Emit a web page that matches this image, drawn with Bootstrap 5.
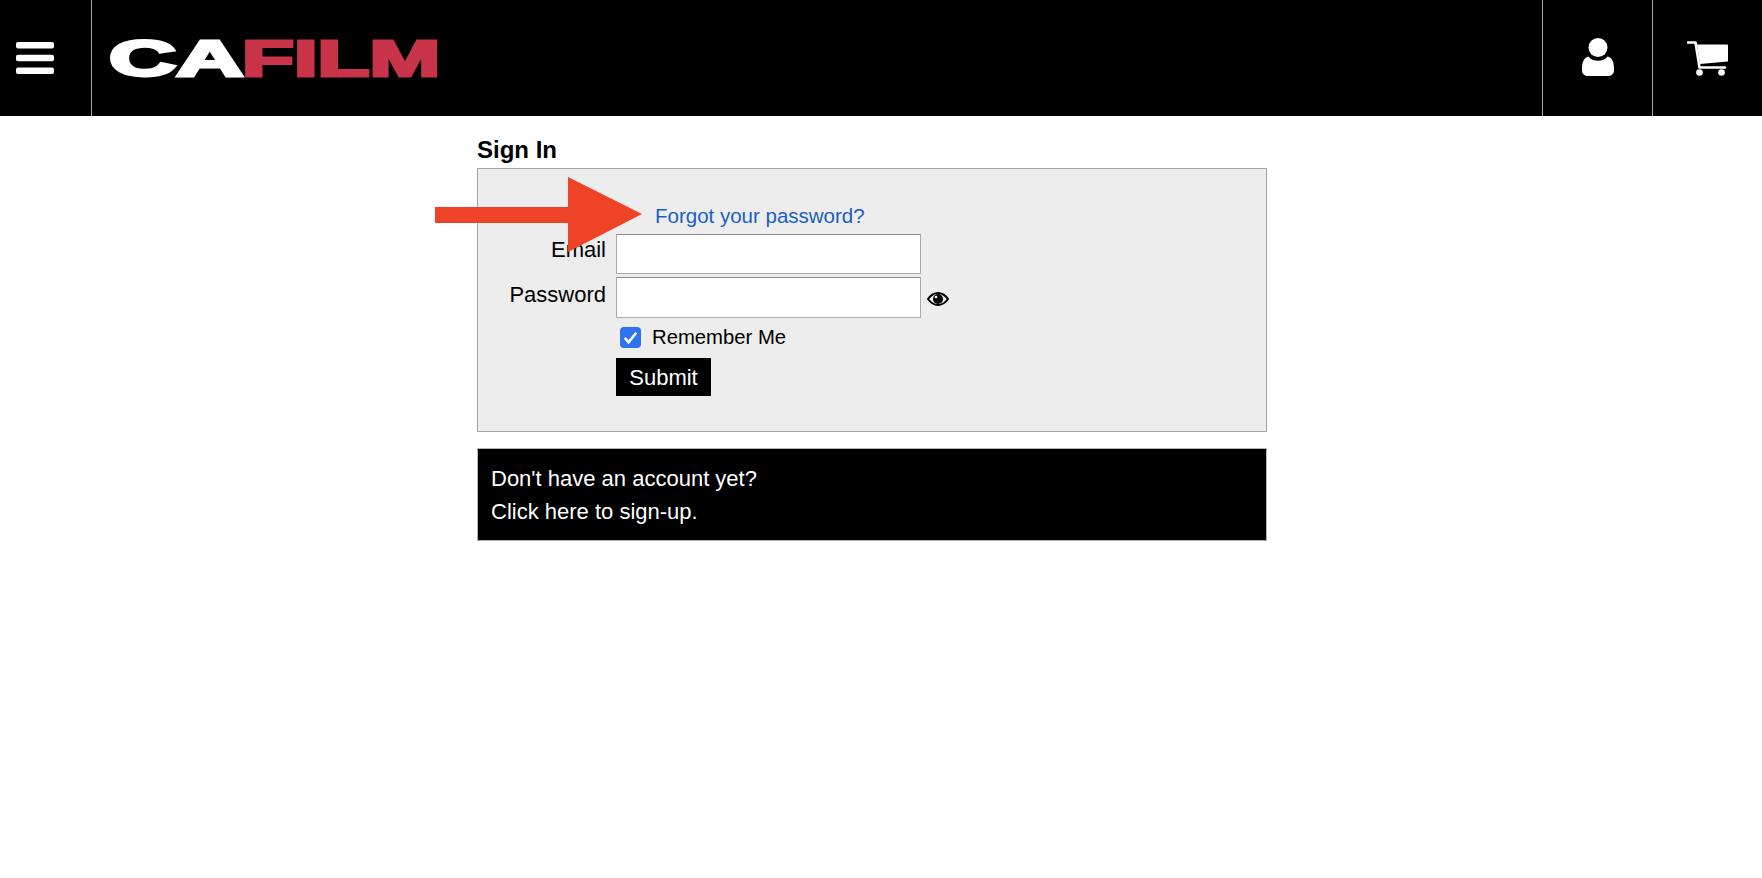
<!DOCTYPE html>
<html lang="en">
<head>
    <meta charset="UTF-8">
    <meta name="viewport" content="width=device-width, initial-scale=1.0">
    <title>Sign In</title>
    <link rel="stylesheet" href="https://cdn.jsdelivr.net/npm/bootstrap@5.3.0/dist/css/bootstrap.min.css">
    <style>
        body {
            font-family: "Liberation Sans", Arial, sans-serif;
            color: #000;
            background: #fff;
        }
        .site-header {
            height: 116px;
            background: #000;
        }
        .menu-cell {
            width: 92px;
            padding-left: 16px;
            border-right: 1px solid #aaa;
        }
        .logo-cell {
            padding-left: 16px;
        }
        .logo-svg {
            overflow: visible;
        }
        .logo-text {
            font-family: "Liberation Sans", Arial, sans-serif;
            font-weight: 700;
            font-size: 50px;
            stroke-width: 3px;
        }
        .logo-white { fill: #fff; stroke: #fff; }
        .logo-red { fill: #c9344a; stroke: #c9344a; }
        .icon-cell {
            width: 110px;
            border-left: 1px solid #aaa;
        }
        .user-icon {
            margin-bottom: 2px;
        }
        .page-main {
            width: 790px;
            margin-left: 477px;
            position: relative;
        }
        .page-title {
            font-size: 24px;
            font-weight: 700;
            line-height: 28px;
            margin: 0;
            padding-top: 20px;
            height: 52px;
        }
        .signin-panel {
            height: 264px;
            background: #ededed;
            border: 1px solid #a5a5a5;
            padding-top: 35px;
            font-size: 22px;
        }
        .form-rows {
            display: grid;
            grid-template-columns: 128px 305px auto;
            column-gap: 10px;
            justify-content: start;
        }
        .forgot-link {
            color: #1b5fc6;
            text-decoration: none;
            font-size: 20.5px;
            line-height: 24px;
            padding-left: 39px;
            height: 30px;
            grid-column: 2 / 4;
        }
        .row-label {
            text-align: right;
            line-height: 24px;
            padding-top: 4px;
        }
        .password-label {
            padding-top: 6px;
        }
        .plain-input {
            height: 40px;
            border: 1px solid #aaa;
            border-top-color: #8a8a8a;
            background: #fff;
            width: 305px;
            padding: 0 6px;
            margin-bottom: 3px;
            outline: none;
        }
        #password {
            height: 41px;
            margin-bottom: 0;
        }
        .eye-icon {
            margin-top: 15px;
            margin-left: -4px;
        }
        .remember-row {
            height: 40px;
            gap: 11px;
            padding-left: 4px;
            padding-bottom: 1px;
            font-size: 20.3px;
        }
        .remember-row input {
            appearance: none;
            width: 21px;
            height: 21px;
            margin: 0;
            border-radius: 4px;
            background: #2f73ee url("data:image/svg+xml,%3Csvg xmlns='http://www.w3.org/2000/svg' viewBox='0 0 22 22'%3E%3Cpath d='M5 11.5l4 4.5 8-10' fill='none' stroke='%23fff' stroke-width='2.8'/%3E%3C/svg%3E");
        }
        .submit-btn {
            width: 95px;
            height: 38px;
            background: #000;
            color: #fff;
            border: 0;
            border-radius: 0;
            font-size: 22px;
            padding: 0;
        }
        .signup-box {
            margin-top: 16px;
            height: 93px;
            background: #000;
            color: #fff;
            border: 1px solid #b5b5b5;
            padding: 13px 13px;
            font-size: 22px;
            line-height: 33px;
        }
        .signup-box a {
            color: #fff;
            text-decoration: none;
        }
        .callout-arrow {
            position: absolute;
            left: -42px;
            top: 61px;
        }
    </style>
</head>
<body>

    <header class="site-header d-flex align-items-stretch">
        <div class="menu-cell d-flex align-items-center">
            <svg width="38" height="32" viewBox="0 0 38 32" aria-label="Menu">
                <rect x="0" y="0" width="38" height="6.500" rx="2" fill="#fff"/>
                <rect x="0" y="12.800" width="38" height="6.500" rx="2" fill="#fff"/>
                <rect x="0" y="25.500" width="38" height="6.500" rx="2" fill="#fff"/>
            </svg>
        </div>
        <div class="logo-cell d-flex align-items-center flex-grow-1">
            <svg class="logo-svg" width="332" height="46" viewBox="0 0 332 46" aria-label="CAFILM">
                <text class="logo-text logo-white" transform="translate(1 40.800) scale(1.860 1)">CA</text>
                <text class="logo-text logo-red" transform="translate(134 40.800) scale(1.700 1)">FILM</text>
            </svg>
        </div>
        <div class="icon-cell d-flex align-items-center justify-content-center">
            <svg class="user-icon" width="32" height="38" viewBox="0 0 32 38" aria-label="Account">
                <circle cx="16" cy="9.500" r="9.500" fill="#fff"/>
                <path d="M6.500 18.500c2 3 5.500 4.300 9.500 4.300s7.500-1.300 9.500-4.300c4 .5 6.500 5.500 6.500 11.500v2.500c0 3-2.500 5.500-5.500 5.500H5.500C2.500 38 0 35.500 0 32.500V30c0-6 2.500-11 6.500-11.500z" fill="#fff"/>
            </svg>
        </div>
        <div class="icon-cell d-flex align-items-center justify-content-center">
            <svg width="41" height="35" viewBox="0 0 41 35" aria-label="Cart">
                <path d="M1 1.500H8.500L12.500 26.500H38" fill="none" stroke="#fff" stroke-width="2.600" stroke-linecap="round" stroke-linejoin="round"/>
                <path d="M10 3.500H40a1 1 0 0 1 1 1V20.500L13 23z" fill="#fff"/>
                <circle cx="12.500" cy="31.500" r="3.300" fill="#fff"/>
                <circle cx="34.500" cy="31.500" r="3.300" fill="#fff"/>
            </svg>
        </div>
    </header>

    <main class="page-main">
        <h1 class="page-title">Sign In</h1>

        <div class="signin-panel">
            <form class="form-rows">
                <a class="forgot-link" href="#">Forgot your password?</a>

                <label class="row-label" for="email">Email</label>
                <input class="plain-input" id="email" type="text">
                <span></span>

                <label class="row-label password-label" for="password">Password</label>
                <input class="plain-input" id="password" type="password">
                <svg class="eye-icon" width="22" height="14" viewBox="0 0 22 14" aria-label="Show password">
                    <path d="M1 7c2.700-3.800 6.300-6 10-6s7.300 2.200 10 6c-2.700 3.800-6.300 6-10 6S3.700 10.800 1 7z" fill="none" stroke="#000" stroke-width="2"/>
                    <circle cx="11" cy="7" r="5" fill="#000"/>
                    <circle cx="9" cy="5" r="1.300" fill="#fff"/>
                </svg>

                <span></span>
                <div class="remember-row d-flex align-items-center">
                    <input type="checkbox" id="remember" checked>
                    <label for="remember">Remember Me</label>
                </div>
                <span></span>

                <span></span>
                <div><button type="button" class="submit-btn">Submit</button></div>
            </form>
        </div>

        <div class="signup-box">
            Don't have an account yet?<br>
            <a href="#">Click here to sign-up.</a>
        </div>

        <svg class="callout-arrow" width="207" height="75" viewBox="0 0 207 75">
            <polygon points="0,30 133,30 133,0 207,37 133,75 133,46 0,46" fill="#ee4327"/>
        </svg>
    </main>

    <script src="https://cdn.jsdelivr.net/npm/bootstrap@5.3.0/dist/js/bootstrap.bundle.min.js"></script>
</body>
</html>
